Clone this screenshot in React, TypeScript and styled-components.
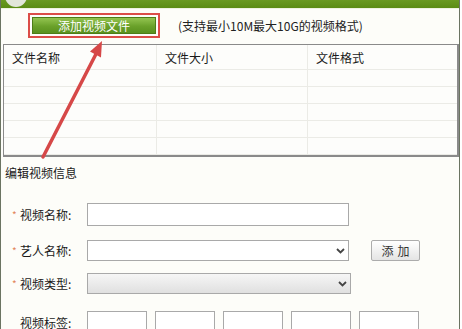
import React from 'react'
import styled, { createGlobalStyle } from 'styled-components'

const GlobalStyle = createGlobalStyle`
  html, body {
    margin: 0;
    padding: 0;
    background: #ffffff;
  }
  body {
    font-family: "Noto Sans CJK SC", "Liberation Sans", sans-serif;
    font-size: 12px;
    color: #1a1a1a;
  }
`

const Window = styled.div`
  position: relative;
  width: 458px;
  height: 329px;
  overflow: hidden;
  background: #fdfdf9;
  border-left: 1px solid #6b7462;
  border-right: 1px solid #6b7462;
`

const TitleBar = styled.div`
  height: 8px;
  display: flex;
  overflow: hidden;
  background: linear-gradient(#6a9a22, #5b8c14);
  border-bottom: 1px solid #eef2e0;
`

const TitleIcon = styled.span`
  width: 22px;
  height: 22px;
  margin: -15px 0 0 4px;
  border-radius: 50%;
  background: #e2e6da;
`

const Toolbar = styled.div`
  display: flex;
  align-items: center;
  height: 26px;
  margin-top: 3px;
  padding-left: 27px;
`

const Highlight = styled.div`
  display: flex;
  padding: 2px;
  border: 2px solid #dc4d48;
`

const GreenButton = styled.button`
  width: 124px;
  height: 17px;
  padding: 0;
  border: 1px solid #4d7d17;
  background: linear-gradient(#93c450, #6aa12a 55%, #5a911e);
  color: #ffffff;
  font-family: inherit;
  font-size: 12px;
  line-height: 15px;
  cursor: pointer;
`

const Hint = styled.span`
  margin-left: 18px;
  color: #222;
`

const FileTable = styled.div`
  width: 453px;
  margin: 6px 0 0 2px;
  border: 1px solid #8a8a8a;
  border-width: 1px 2px 2px 1px;
  background: #fdfdfb;
`

const TableRow = styled.div<{ $head?: boolean }>`
  display: grid;
  grid-template-columns: 153px 151px 1fr;
  height: ${({ $head }) => ($head ? '24px' : '16px')};
  border-bottom: 1px solid #ebebe6;
`

const Cell = styled.div`
  display: flex;
  align-items: center;
  padding-left: 8px;
  border-right: 1px solid #ebebe6;
  &:last-child {
    border-right: none;
  }
`

const SectionTitle = styled.div`
  margin: 7px 0 0 4px;
  height: 18px;
  line-height: 18px;
`

const Form = styled.div`
  display: flex;
  flex-direction: column;
  margin-top: 21px;
`

const FormRow = styled.div<{ $top?: number; $height?: number }>`
  display: flex;
  align-items: center;
  height: ${({ $height }) => $height ?? 21}px;
  margin-top: ${({ $top }) => $top ?? 0}px;
`

const Label = styled.label`
  display: flex;
  align-items: center;
  width: 86px;
  padding-left: 11px;
  box-sizing: border-box;
  white-space: nowrap;
`

const Star = styled.span<{ $hidden?: boolean }>`
  width: 8px;
  color: #e2855a;
  font-size: 10px;
  visibility: ${({ $hidden }) => ($hidden ? 'hidden' : 'visible')};
`

const TextInput = styled.input`
  width: 262px;
  height: 23px;
  box-sizing: border-box;
  border: 1px solid #a9a9a9;
  background: #ffffff;
  padding: 0 4px;
`

const SelectBox = styled.div<{ $disabled?: boolean }>`
  display: flex;
  align-items: center;
  justify-content: flex-end;
  width: ${({ $disabled }) => ($disabled ? '264px' : '262px')};
  height: 21px;
  box-sizing: border-box;
  padding-right: 3px;
  border: 1px solid #a9a9a9;
  background: ${({ $disabled }) =>
    $disabled ? 'linear-gradient(#f6f6f6, #e0e0e0)' : '#ffffff'};
`

const AddButton = styled.button`
  width: 49px;
  height: 21px;
  margin-left: 22px;
  padding: 0;
  border: 1px solid #acacac;
  border-radius: 2px;
  background: linear-gradient(#ffffff, #e4e4e4);
  color: #333;
  font-family: inherit;
  font-size: 12px;
  letter-spacing: 4px;
  text-indent: 4px;
`

const TagList = styled.div`
  display: flex;
  gap: 8px;
  align-self: flex-start;
`

const TagBox = styled.div`
  width: 60px;
  height: 30px;
  box-sizing: border-box;
  border: 1px solid #a9a9a9;
  background: #ffffff;
`

const Overlay = styled.svg`
  position: absolute;
  left: 0;
  top: 0;
  pointer-events: none;
`

const Chevron = () => (
  <svg width="9" height="6" viewBox="0 0 9 6">
    <path d="M1 1 L4.5 4.5 L8 1" fill="none" stroke="#444" strokeWidth="1.8" />
  </svg>
)

const rows = [0, 1, 2, 3, 4]

export default function App() {
  return (
    <>
      <GlobalStyle />
      <Window>
        <TitleBar>
          <TitleIcon />
        </TitleBar>
        <Toolbar>
          <Highlight>
            <GreenButton>添加视频文件</GreenButton>
          </Highlight>
          <Hint>(支持最小10M最大10G的视频格式)</Hint>
        </Toolbar>
        <FileTable>
          <TableRow $head>
            <Cell>文件名称</Cell>
            <Cell>文件大小</Cell>
            <Cell>文件格式</Cell>
          </TableRow>
          {rows.map((r) => (
            <TableRow key={r}>
              <Cell />
              <Cell />
              <Cell />
            </TableRow>
          ))}
        </FileTable>
        <SectionTitle>编辑视频信息</SectionTitle>
        <Form>
          <FormRow $height={23}>
            <Label>
              <Star>*</Star>视频名称:
            </Label>
            <TextInput />
          </FormRow>
          <FormRow $top={14}>
            <Label>
              <Star>*</Star>艺人名称:
            </Label>
            <SelectBox>
              <Chevron />
            </SelectBox>
            <AddButton>添加</AddButton>
          </FormRow>
          <FormRow $top={12}>
            <Label>
              <Star>*</Star>视频类型:
            </Label>
            <SelectBox $disabled>
              <Chevron />
            </SelectBox>
          </FormRow>
          <FormRow $top={17} $height={22}>
            <Label>
              <Star $hidden>*</Star>视频标签:
            </Label>
            <TagList>
              {rows.map((r) => (
                <TagBox key={r} />
              ))}
            </TagList>
          </FormRow>
        </Form>
        <Overlay width="460" height="329">
          <line x1="42" y1="157" x2="95" y2="54" stroke="#d64848" strokeWidth="3.5" strokeLinecap="round" />
          <polygon points="101,41 100,57.5 89,51.5" fill="#d64848" />
        </Overlay>
      </Window>
    </>
  )
}
